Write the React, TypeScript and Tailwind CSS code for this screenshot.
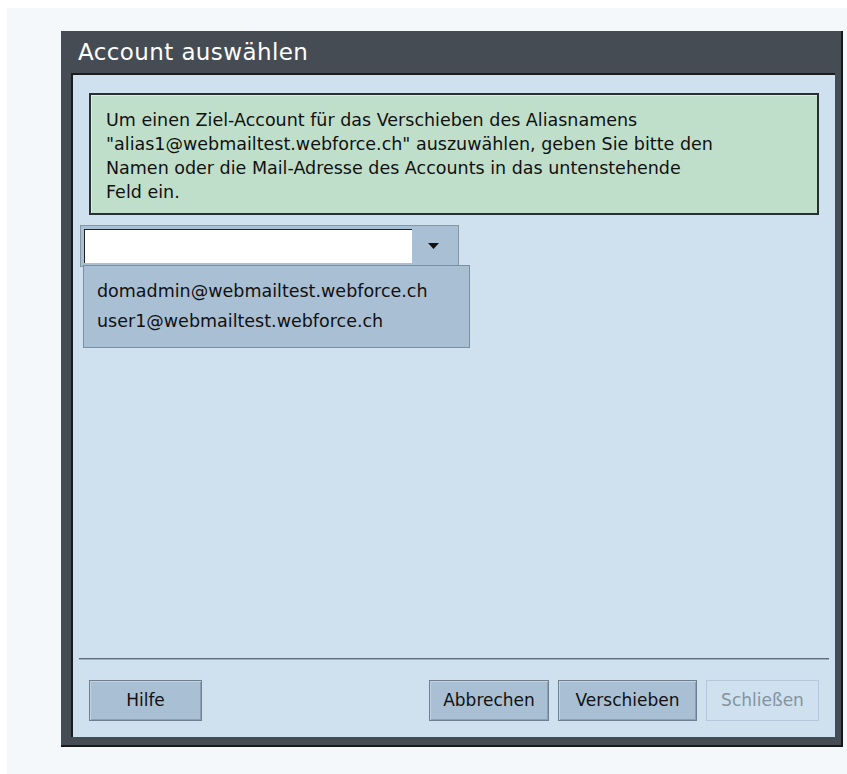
import React from 'react';

const font = { fontFamily: '"DejaVu Sans", Verdana, sans-serif' };

const Button: React.FC<{ label: string; width: string; disabled?: boolean }> = ({ label, width, disabled }) => (
  <button
    className={
      disabled
        ? `${width} h-[41px] border border-[#b5c8d9] bg-[#cfe0ef] text-[17px] text-[#8593a0]`
        : `${width} h-[41px] border border-[#6f7f8e] bg-[#a9bfd4] text-[17px] text-[#111] shadow-[inset_1px_1px_0_#c3d3e2,inset_-1px_-1px_0_#8d9fb1]`
    }
  >
    {label}
  </button>
);

export default function App() {
  return (
    <div className="min-h-screen w-full bg-white pl-[7px] pt-[8px]" style={font}>
      <div className="min-h-[766px] bg-[#f5f8fb] pl-[54px] pt-[23px]">
        {/* dialog frame */}
        <div className="flex h-[716px] w-[782px] flex-col bg-[#454c54] pb-[10px] pl-[10px] pr-[8px] shadow-[inset_-2px_-2px_0_#16191c]">
          <div className="flex h-[42px] shrink-0 items-center pl-[7px] text-[23px] leading-none tracking-[0.4px] text-white">
            Account auswählen
          </div>

          {/* content panel */}
          <div className="flex flex-1 flex-col border-l-2 border-t-2 border-[#1a1d20] bg-[#cfe0ef]">
            <div className="mx-[16px] mt-[18px] h-[122px] border-2 border-[#2a2f34] bg-[#c0dfcb] px-[15px] pt-[13px] text-[17.5px] leading-[24px] text-[#111] shadow-[inset_1px_1px_0_#dcefe2]">
              Um einen Ziel-Account für das Verschieben des Aliasnamens
              <br />
              "alias1@webmailtest.webforce.ch" auszuwählen, geben Sie bitte den
              <br />
              Namen oder die Mail-Adresse des Accounts in das untenstehende
              <br />
              Feld ein.
            </div>

            {/* combo box with open list */}
            <div className="relative ml-[7px] mt-[10px] h-[42px] w-[379px]">
              <div className="flex h-full w-full border border-[#8696a5] bg-[#a9bfd4] p-[3px]">
                <div className="h-[34px] w-[328px] border-l border-t border-[#222] bg-white" />
                <div className="flex flex-1 items-center justify-center">
                  <svg width="11" height="6" viewBox="0 0 11 6">
                    <path d="M0 0h11L5.5 6z" fill="#111" />
                  </svg>
                </div>
              </div>
              <div className="absolute left-[3px] top-[40px] w-[387px] border border-[#7f8e9c] bg-[#a9bfd4] pb-[11px] pl-[13px] pt-[10px] text-[17.5px] leading-[30px] text-[#111]">
                <div>domadmin@webmailtest.webforce.ch</div>
                <div>user1@webmailtest.webforce.ch</div>
              </div>
            </div>

            <div className="flex-1" />

            <div className="mx-[6px] h-[2px] border-t border-b border-[#5d6b78] border-b-[#9fb0c0]" />

            <div className="flex items-center px-[16px] pb-[16px] pt-[20px]">
              <Button label="Hilfe" width="w-[113px]" />
              <div className="flex-1" />
              <div className="flex gap-[9px]">
                <Button label="Abbrechen" width="w-[120px]" />
                <Button label="Verschieben" width="w-[139px]" />
                <Button label="Schließen" width="w-[113px]" disabled />
              </div>
            </div>
          </div>
        </div>
      </div>
    </div>
  );
}
